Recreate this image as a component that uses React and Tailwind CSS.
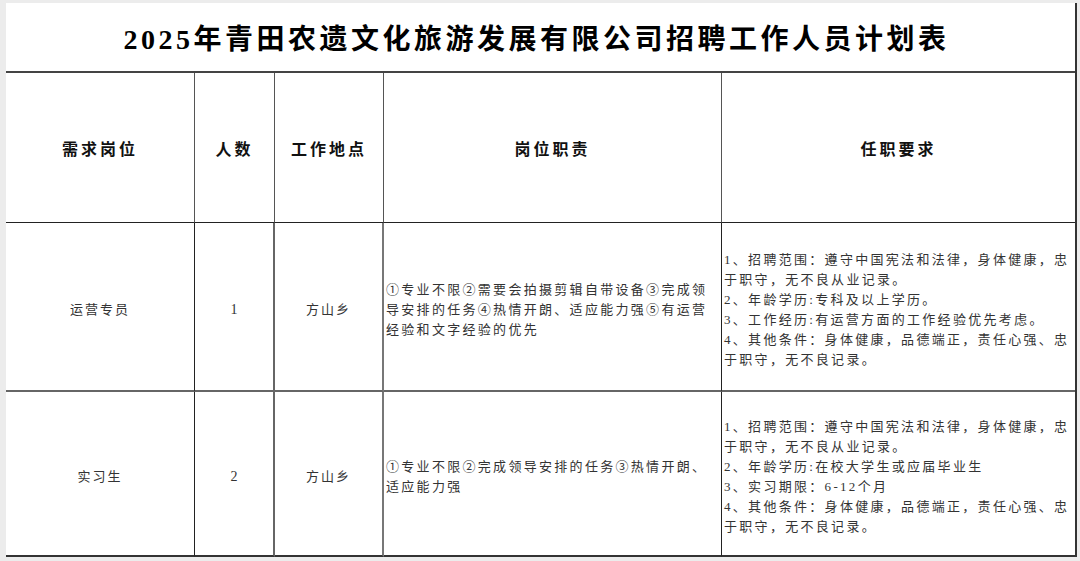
import React from "react";

const font = "font-['Liberation_Serif','Noto_Sans_CJK_SC',serif]";

const headers = ["需求岗位", "人数", "工作地点", "岗位职责", "任职要求"];

const rows = [
  {
    name: "运营专员",
    count: "1",
    place: "方山乡",
    duties: [
      "①专业不限②需要会拍摄剪辑自带设备③完成领",
      "导安排的任务④热情开朗、适应能力强⑤有运营",
      "经验和文字经验的优先",
    ],
    reqs: [
      "1、招聘范围：遵守中国宪法和法律，身体健康，忠",
      "于职守，无不良从业记录。",
      "2、年龄学历:专科及以上学历。",
      "3、工作经历:有运营方面的工作经验优先考虑。",
      "4、其他条件：身体健康，品德端正，责任心强、忠",
      "于职守，无不良记录。",
    ],
    h: "h-[169px]",
  },
  {
    name: "实习生",
    count: "2",
    place: "方山乡",
    duties: ["①专业不限②完成领导安排的任务③热情开朗、", "适应能力强"],
    reqs: [
      "1、招聘范围：遵守中国宪法和法律，身体健康，忠",
      "于职守，无不良从业记录。",
      "2、年龄学历:在校大学生或应届毕业生",
      "3、实习期限：6-12个月",
      "4、其他条件：身体健康，品德端正，责任心强、忠",
      "于职守，无不良记录。",
    ],
    h: "h-[165px]",
  },
];

const Lines = ({ lines }) => (
  <div className="leading-[20px]">
    {lines.map((l, i) => (
      <div key={i} className="whitespace-nowrap">
        {l}
      </div>
    ))}
  </div>
);

export default function App() {
  return (
    <div className={`h-[561px] w-[1080px] overflow-hidden bg-[#ececec] pt-[3px] pl-[6px] ${font}`}>
      <div className="w-[1071px] bg-white border-r-2 border-[#333]">
        <div className="h-[70px] flex items-center justify-center border-b-2 border-[#444] pt-[6px] pr-[8px]">
          <h1 className="text-[28px] font-bold tracking-[3.5px] text-black">
            2025年青田农遗文化旅游发展有限公司招聘工作人员计划表
          </h1>
        </div>
        <div className="grid grid-cols-[189px_80px_109px_338px_353px]">
          {headers.map((h, i) => (
            <div
              key={h}
              className={`h-[150px] flex items-center justify-center border-b border-[#222] text-[16px] font-bold tracking-[3px] text-[#111] pt-[4px] ${
                i < 4 ? "border-r border-r-[#555]" : ""
              }`}
            >
              {h}
            </div>
          ))}
          {rows.map((r, ri) => (
            <React.Fragment key={r.name}>
              <div
                className={`${r.h} flex items-center justify-center border-r border-r-[#222] text-[13px] tracking-[2px] text-[#333] pt-[6px] ${
                  ri === 0 ? "border-b-2 border-b-[#666]" : "border-b-2 border-b-[#333]"
                }`}
              >
                {r.name}
              </div>
              <div
                className={`${r.h} flex items-center justify-center border-r-2 border-r-[#666] text-[14px] text-[#333] pt-[6px] ${
                  ri === 0 ? "border-b-2 border-b-[#666]" : "border-b-2 border-b-[#333]"
                }`}
              >
                {r.count}
              </div>
              <div
                className={`${r.h} flex items-center justify-center border-r-2 border-r-[#777] text-[13px] tracking-[2px] text-[#333] pt-[6px] ${
                  ri === 0 ? "border-b-2 border-b-[#666]" : "border-b-2 border-b-[#333]"
                }`}
              >
                {r.place}
              </div>
              <div
                className={`${r.h} flex items-center pl-[2px] border-r border-r-[#222] text-[13px] tracking-[2.3px] text-[#333] pt-[6px] ${
                  ri === 0 ? "border-b-2 border-b-[#666]" : "border-b-2 border-b-[#333]"
                }`}
              >
                <Lines lines={r.duties} />
              </div>
              <div
                className={`${r.h} flex items-center pl-[2px] text-[13px] tracking-[2.3px] text-[#333] pt-[6px] ${
                  ri === 0 ? "border-b-2 border-b-[#666]" : "border-b-2 border-b-[#333]"
                }`}
              >
                <Lines lines={r.reqs} />
              </div>
            </React.Fragment>
          ))}
        </div>
      </div>
    </div>
  );
}
